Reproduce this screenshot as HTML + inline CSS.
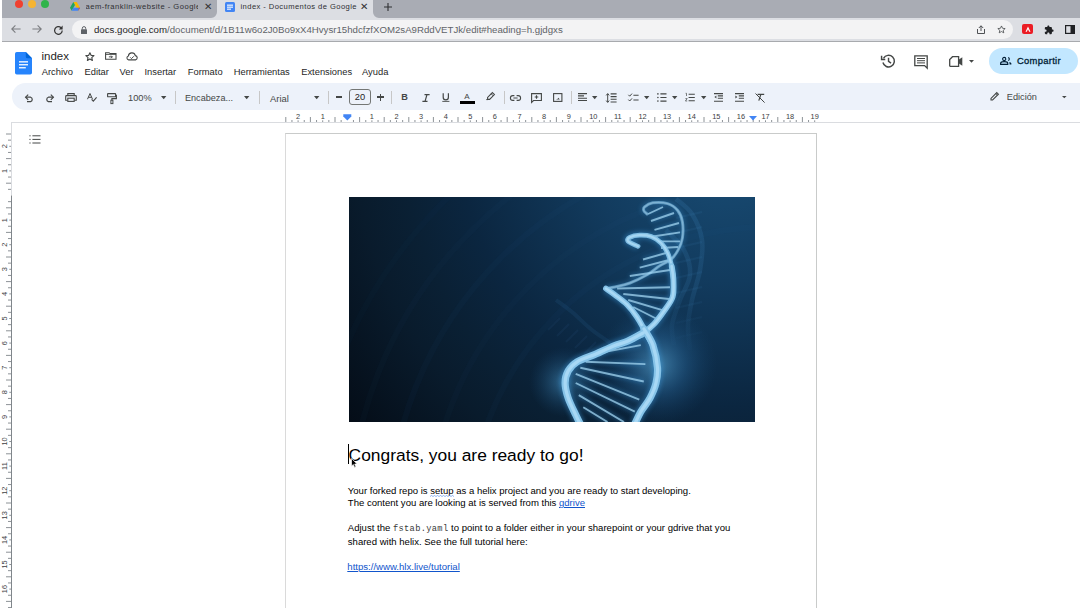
<!DOCTYPE html>
<html><head><meta charset="utf-8">
<style>
*{margin:0;padding:0;box-sizing:border-box}
html,body{width:1080px;height:608px;overflow:hidden;background:#fff;font-family:"Liberation Sans",sans-serif;position:relative}
.a{position:absolute}
.t{position:absolute;white-space:nowrap;line-height:1}
svg{position:absolute;overflow:visible}
</style></head><body>

<!-- ===== Chrome tab bar ===== -->
<div class="a" style="left:2px;top:0;width:1078px;height:18px;background:#a9acb4"></div>
<!-- traffic lights -->
<div class="a" style="left:15px;top:0px;width:8px;height:8px;border-radius:50%;background:#f0402f"></div>
<div class="a" style="left:28px;top:0px;width:8px;height:8px;border-radius:50%;background:#f5b433"></div>
<div class="a" style="left:41px;top:0px;width:8px;height:8px;border-radius:50%;background:#2fb44a"></div>
<!-- tab 1 -->
<svg style="left:70px;top:2px" width="10" height="9" viewBox="0 0 10 9">
 <path d="M3.3 0 L6.7 0 L10 5.8 L8.3 8.7 Z" fill="#f7b900"/>
 <path d="M3.3 0 L0 5.8 L1.7 8.7 L5 2.9 Z" fill="#1fa463"/>
 <path d="M1.7 8.7 L8.3 8.7 L10 5.8 L3.3 5.8 Z" fill="#4285f4"/>
 <path d="M8.3 8.7 L10 5.8 L8.8 5.8 Z" fill="#ea4335"/>
</svg>
<div class="t" style="left:85.5px;top:3.2px;font-size:7.6px;letter-spacing:0.48px;color:#2f3033;width:112px;overflow:hidden">aem-franklin-website - Google Drive</div>
<div class="t" style="left:204px;top:1.5px;font-size:10px;color:#333">&#x2715;</div>
<!-- active tab -->
<div class="a" style="left:217px;top:0;width:156px;height:18px;background:#dcdee3;border-radius:0 0 0 0"></div>
<svg style="left:211px;top:12px" width="6" height="6"><path d="M6 0 V6 H0 A6 6 0 0 0 6 0Z" fill="#dcdee3"/></svg>
<svg style="left:373px;top:12px" width="6" height="6"><path d="M0 0 V6 H6 A6 6 0 0 1 0 0Z" fill="#dcdee3"/></svg>
<svg style="left:225px;top:2px" width="10" height="10" viewBox="0 0 10 10">
 <rect x="0" y="0" width="10" height="10" rx="1.5" fill="#4285f4"/>
 <rect x="2" y="2.6" width="6" height="1.1" fill="#fff"/><rect x="2" y="4.6" width="6" height="1.1" fill="#fff"/><rect x="2" y="6.6" width="4" height="1.1" fill="#fff"/>
</svg>
<div class="t" style="left:240.5px;top:3.2px;font-size:7.6px;letter-spacing:0.42px;color:#2f3033">index - Documentos de Google</div>
<div class="t" style="left:359.5px;top:1.5px;font-size:10px;color:#333">&#x2715;</div>
<svg style="left:384px;top:2.8px" width="8" height="8" viewBox="0 0 8 8"><path d="M4 0V8M0 4H8" stroke="#2f3033" stroke-width="1.1"/></svg>

<!-- ===== Chrome toolbar ===== -->
<div class="a" style="left:2px;top:18px;width:1078px;height:23px;background:#dcdee3"></div>
<div class="a" style="left:2px;top:40.5px;width:1078px;height:1.5px;background:#a8aaae"></div>
<div class="a" style="left:72px;top:19.5px;width:941px;height:19px;border-radius:10px;background:#f3f3f4"></div>
<div class="t" style="left:94px;top:24.5px;font-size:9.67px;color:#1f1f1f">docs.google.com<span style="color:#5f6368">/document/d/1B11w6o2J0Bo9xX4Hvysr15hdcfzfXOM2sA9RddVETJk/edit#heading=h.gjdgxs</span></div>
<!-- nav icons -->
<svg style="left:10.8px;top:25.2px" width="10" height="8" viewBox="0 0 10 8"><path d="M9.6 4H0.8M4.4 0.4L0.8 4L4.4 7.6" fill="none" stroke="#7b7d81" stroke-width="1.1"/></svg>
<svg style="left:31.6px;top:25.2px" width="10" height="8" viewBox="0 0 10 8"><path d="M0.4 4H9.2M5.6 0.4L9.2 4L5.6 7.6" fill="none" stroke="#7b7d81" stroke-width="1.1"/></svg>
<svg style="left:53px;top:24.5px" width="11" height="11" viewBox="0 0 11 11"><path d="M9.2 5.5A3.8 3.8 0 1 1 8 2.7" fill="none" stroke="#333" stroke-width="1.2"/><path d="M9.6 0.6V4.4H5.8Z" fill="#333"/></svg>
<!-- lock -->
<svg style="left:81px;top:25.5px" width="6" height="8" viewBox="0 0 6 8"><rect x="0" y="3.3" width="6" height="4.7" rx="0.6" fill="#5f6368"/><path d="M1.3 3.5V2.3A1.7 1.7 0 0 1 4.7 2.3V3.5" fill="none" stroke="#5f6368" stroke-width="1"/></svg>
<!-- share / star in omnibox -->
<svg style="left:976.5px;top:25px" width="8" height="9" viewBox="0 0 8 9"><path d="M0.5 4V8.5H7.5V4M4 6V0.8M1.8 3L4 0.8L6.2 3" fill="none" stroke="#3c4043" stroke-width="0.9"/></svg>
<svg style="left:996.5px;top:24.5px" width="9" height="9" viewBox="0 0 24 24"><path d="M12 2.5l2.9 6.3 6.9.7-5.2 4.6 1.5 6.8L12 17.4l-6.1 3.5 1.5-6.8L2.2 9.5l6.9-.7z" fill="none" stroke="#3c4043" stroke-width="2"/></svg>
<!-- extensions -->
<div class="a" style="left:1022px;top:24.3px;width:11px;height:10px;border-radius:2px;background:#eb1c24"></div>
<svg style="left:1024.5px;top:26px" width="6" height="6" viewBox="0 0 6 6"><path d="M0.5 5.8L3 0.5L5.5 5.8H4.2L3 3.2L1.8 5.8Z" fill="#fff"/></svg>
<svg style="left:1043.5px;top:24.5px" width="10" height="10" viewBox="0 0 24 24"><path d="M20.5 11H19V7c0-1.1-.9-2-2-2h-4V3.5C13 2.12 11.88 1 10.5 1S8 2.12 8 3.5V5H4c-1.1 0-2 .9-2 2v3.8h1.5c1.49 0 2.7 1.21 2.7 2.7s-1.21 2.7-2.7 2.7H2V20c0 1.1.9 2 2 2h3.8v-1.5c0-1.49 1.21-2.7 2.7-2.7 1.49 0 2.7 1.21 2.7 2.7V22H17c1.1 0 2-.9 2-2v-4h1.5c1.38 0 2.5-1.12 2.5-2.5S21.88 11 20.5 11z" fill="#202124"/></svg>
<svg style="left:1064.5px;top:25px" width="10" height="9" viewBox="0 0 10 9"><rect x="0.6" y="0.6" width="8.8" height="7.8" fill="none" stroke="#202124" stroke-width="1.2"/><rect x="5.5" y="0.6" width="3.9" height="7.8" fill="#202124"/></svg>

<!-- ===== Docs header ===== -->
<svg style="left:15px;top:51.8px" width="17" height="23" viewBox="0 0 17 23">
 <path d="M1.8 0H10.8L17 6.3V20.8A1.8 1.8 0 0 1 15.2 22.6H1.8A1.8 1.8 0 0 1 0 20.8V1.8A1.8 1.8 0 0 1 1.8 0Z" fill="#2684fc"/>
 <path d="M10.8 0L17 6.3H12.3A1.5 1.5 0 0 1 10.8 4.8Z" fill="#0066da"/>
 <rect x="4" y="9.2" width="9" height="1.3" fill="#fff"/><rect x="4" y="12.1" width="9" height="1.3" fill="#fff"/><rect x="4" y="15.1" width="6.8" height="1.3" fill="#fff"/>
</svg>
<div class="t" style="left:41.5px;top:50.8px;font-size:11.5px;color:#1f1f1f">index</div>
<svg style="left:84.8px;top:51.8px" width="9.8" height="8.6" viewBox="0 0 24 21"><path d="M12 1.8l2.9 6.4 7 .7-5.3 4.8 1.5 6.9L12 17l-6.1 3.6 1.5-6.9L2.1 8.9l7-.7z" fill="none" stroke="#444746" stroke-width="2.8" stroke-linejoin="round"/></svg>
<svg style="left:104.8px;top:52.1px" width="11.6" height="8" viewBox="0 0 12 8"><path d="M0.6 7.4V0.6H4.2L5.2 1.5H11.4V7.4Z" fill="none" stroke="#444746" stroke-width="1.1"/><path d="M0.6 2.4H11.4" stroke="#444746" stroke-width="0.9"/><path d="M4 4.9H7.6M6.3 3.6L7.6 4.9L6.3 6.2" fill="none" stroke="#444746" stroke-width="1"/></svg>
<svg style="left:125.6px;top:52.6px" width="12" height="7.5" viewBox="0 0 12 7.5"><path d="M2.6 6.9A2 2 0 0 1 2.4 3A3.5 3.5 0 0 1 9.3 2.6A2.2 2.2 0 0 1 9.6 6.9Z" fill="none" stroke="#444746" stroke-width="1.1"/><path d="M4.3 4.4L5.5 5.6L7.8 3.3" fill="none" stroke="#444746" stroke-width="1"/></svg>

<div class="t" style="left:41.7px;top:67.5px;font-size:9.35px;color:#1f1f1f">Archivo</div>
<div class="t" style="left:84.5px;top:67.5px;font-size:9.35px;color:#1f1f1f">Editar</div>
<div class="t" style="left:119.6px;top:67.5px;font-size:9.35px;color:#1f1f1f">Ver</div>
<div class="t" style="left:144.5px;top:67.5px;font-size:9.35px;color:#1f1f1f">Insertar</div>
<div class="t" style="left:187.8px;top:67.5px;font-size:9.35px;color:#1f1f1f">Formato</div>
<div class="t" style="left:233.7px;top:67.5px;font-size:9.35px;color:#1f1f1f">Herramientas</div>
<div class="t" style="left:301.2px;top:67.5px;font-size:9.35px;color:#1f1f1f">Extensiones</div>
<div class="t" style="left:362px;top:67.5px;font-size:9.35px;color:#1f1f1f">Ayuda</div>

<!-- right header icons -->
<svg style="left:881.3px;top:54.3px" width="14.5" height="14" viewBox="0 0 15 14"><path d="M2.6 4.2A6 6 0 1 1 2 8.6" fill="none" stroke="#444746" stroke-width="1.5"/><path d="M0.6 1.6V5.4H4.4" fill="none" stroke="#444746" stroke-width="1.5"/><path d="M7.8 3.6V7.4L10.4 9.2" fill="none" stroke="#444746" stroke-width="1.5"/></svg>
<svg style="left:913.5px;top:55px" width="14" height="14" viewBox="0 0 14 14"><path d="M0.8 0.8H13.2V13.2L10.6 10.6H0.8Z" fill="none" stroke="#444746" stroke-width="1.3"/><path d="M3 3.5H11M3 5.7H11M3 7.9H11" stroke="#444746" stroke-width="1"/></svg>
<svg style="left:948.5px;top:55.8px" width="14" height="11" viewBox="0 0 14 11"><path d="M3.5 0.7H9.6V10.3H1.3A0.6 0.6 0 0 1 0.7 9.7V3.5Z" fill="none" stroke="#444746" stroke-width="1.3"/><path d="M9.6 3.8L13.3 1.2V9.8L9.6 7.2Z" fill="#444746"/></svg>
<svg style="left:968.5px;top:60.3px" width="5" height="3" viewBox="0 0 5 3"><path d="M0 0H5L2.5 2.7Z" fill="#444746"/></svg>
<div class="a" style="left:989px;top:48px;width:89px;height:26px;border-radius:13px;background:#c2e7ff"></div>
<svg style="left:999.5px;top:57px" width="12" height="8" viewBox="0 0 12 8"><circle cx="4.2" cy="2" r="1.6" fill="none" stroke="#001d35" stroke-width="1.1"/><path d="M0.6 7.4V6.4C0.6 5.2 2.2 4.6 4.2 4.6S7.8 5.2 7.8 6.4V7.4Z" fill="none" stroke="#001d35" stroke-width="1.1"/><path d="M8.2 0.4A1.7 1.7 0 0 1 8.2 3.6" fill="none" stroke="#001d35" stroke-width="1.1"/><path d="M9.4 4.9C10.6 5.3 11.4 5.9 11.4 6.6V7.4H9.6" fill="#001d35"/></svg>
<div class="t" style="left:1017px;top:55.9px;font-size:9.4px;letter-spacing:0.3px;color:#001d35;-webkit-text-stroke:0.3px #001d35">Compartir</div>
<!-- ===== Docs toolbar ===== -->
<div class="a" style="left:12px;top:83px;width:1090px;height:27px;border-radius:13.5px;background:#edf2fa"></div>
<!-- undo / redo -->
<svg style="left:24.5px;top:93.7px" width="9" height="8" viewBox="0 0 9 8"><path d="M0.8 3.2H5.6A2.3 2.3 0 0 1 5.6 7.6H2" fill="none" stroke="#444746" stroke-width="1.2"/><path d="M3.2 0.6L0.6 3.2L3.2 5.8" fill="none" stroke="#444746" stroke-width="1.2"/></svg>
<svg style="left:45.3px;top:93.7px" width="9" height="8" viewBox="0 0 9 8"><path d="M8.2 3.2H3.4A2.3 2.3 0 0 0 3.4 7.6H7" fill="none" stroke="#444746" stroke-width="1.2"/><path d="M5.8 0.6L8.4 3.2L5.8 5.8" fill="none" stroke="#444746" stroke-width="1.2"/></svg>
<!-- print -->
<svg style="left:64.5px;top:93px" width="12" height="9" viewBox="0 0 12 9"><path d="M2.8 2.6V0.6H9.2V2.6" fill="none" stroke="#444746" stroke-width="1.1"/><path d="M2.6 7.2H0.7V3.4A0.8 0.8 0 0 1 1.5 2.6H10.5A0.8 0.8 0 0 1 11.3 3.4V7.2H9.4" fill="none" stroke="#444746" stroke-width="1.1"/><rect x="2.8" y="5.2" width="6.4" height="3.2" fill="none" stroke="#444746" stroke-width="1.1"/></svg>
<!-- spellcheck -->
<svg style="left:86.5px;top:92.8px" width="10" height="9" viewBox="0 0 10 9"><path d="M0.5 6.2L3 0.5L5.5 6.2M1.4 4.3H4.6" fill="none" stroke="#444746" stroke-width="1"/><path d="M4.6 6.4L6.3 8.2L9.6 4.4" fill="none" stroke="#444746" stroke-width="1.1"/></svg>
<!-- paint format -->
<svg style="left:107px;top:92.5px" width="10" height="11" viewBox="0 0 10 11"><rect x="0.6" y="0.6" width="8" height="3.2" rx="0.4" fill="none" stroke="#444746" stroke-width="1.1"/><path d="M8.6 2.2H9.4V5.6H4.9V7.2" fill="none" stroke="#444746" stroke-width="1.1"/><rect x="3.9" y="7.2" width="2" height="3.4" fill="none" stroke="#444746" stroke-width="1"/></svg>
<div class="t" style="left:128px;top:94.2px;font-size:9.25px;color:#444746">100%</div>
<svg style="left:160.5px;top:96px" width="6" height="3.5" viewBox="0 0 6 3.5"><path d="M0 0H5.4L2.7 3.2Z" fill="#444746"/></svg>
<div class="a" style="left:174.5px;top:91.3px;width:1px;height:12.3px;background:#c7c7c7"></div>
<div class="t" style="left:185px;top:94.2px;font-size:9.1px;color:#444746">Encabeza...</div>
<svg style="left:244.3px;top:96px" width="6" height="3.5" viewBox="0 0 6 3.5"><path d="M0 0H5.4L2.7 3.2Z" fill="#444746"/></svg>
<div class="a" style="left:259px;top:91.3px;width:1px;height:12.3px;background:#c7c7c7"></div>
<div class="t" style="left:270px;top:94.2px;font-size:9.4px;color:#444746">Arial</div>
<svg style="left:313.5px;top:96px" width="6" height="3.5" viewBox="0 0 6 3.5"><path d="M0 0H5.4L2.7 3.2Z" fill="#444746"/></svg>
<div class="a" style="left:328px;top:91.3px;width:1px;height:12.3px;background:#c7c7c7"></div>
<div class="a" style="left:335.8px;top:96.4px;width:6.4px;height:1.2px;background:#444746"></div>
<div class="a" style="left:349px;top:89.2px;width:21.6px;height:15.6px;border:1px solid #747775;border-radius:3px"></div>
<div class="t" style="left:354.8px;top:93.4px;font-size:9.3px;color:#1f1f1f">20</div>
<div class="a" style="left:377.2px;top:96.4px;width:7px;height:1.2px;background:#444746"></div>
<div class="a" style="left:380.1px;top:93.5px;width:1.2px;height:7px;background:#444746"></div>
<div class="a" style="left:391px;top:91.3px;width:1px;height:12.3px;background:#c7c7c7"></div>
<div class="t" style="left:401.2px;top:93.3px;font-size:9.2px;color:#444746;font-weight:bold">B</div>
<svg style="left:421.5px;top:93.8px" width="8" height="8" viewBox="0 0 8 8"><path d="M2.5 0.6H7.6M0.4 7.4H5.5M5 0.6L3 7.4" fill="none" stroke="#444746" stroke-width="1.2"/></svg>
<svg style="left:442.3px;top:93px" width="8" height="9" viewBox="0 0 8 9"><path d="M1.2 0.3V4.3A2.6 2.6 0 0 0 6.4 4.3V0.3" fill="none" stroke="#444746" stroke-width="1.2"/><path d="M0.3 8.4H7.4" stroke="#444746" stroke-width="0.9"/></svg>
<div class="t" style="left:464.3px;top:92.8px;font-size:8px;color:#444746">A</div>
<div class="a" style="left:460px;top:101.2px;width:15px;height:2.6px;background:#000"></div>
<svg style="left:485.5px;top:92.3px" width="9" height="8" viewBox="0 0 9 8"><path d="M6.4 0.6L8.4 2.6L3.6 7.4H1.6V5.4Z" fill="none" stroke="#444746" stroke-width="1.1"/><path d="M5.2 1.8L7.2 3.8" stroke="#444746" stroke-width="1"/><path d="M0.2 7.6H2" stroke="#444746" stroke-width="0.9"/></svg>
<div class="a" style="left:503.5px;top:91.3px;width:1px;height:12.3px;background:#c7c7c7"></div>
<svg style="left:510px;top:95px" width="11" height="6" viewBox="0 0 11 6"><path d="M4.4 0.6H2.8A2.3 2.3 0 0 0 2.8 5.4H4.4M6.6 0.6H8.2A2.3 2.3 0 0 1 8.2 5.4H6.6M3.4 3H7.6" fill="none" stroke="#444746" stroke-width="1.1"/></svg>
<svg style="left:531px;top:93px" width="11" height="10" viewBox="0 0 11 10"><path d="M0.6 9.4V0.6H10.4V7.5H2.5Z" fill="none" stroke="#444746" stroke-width="1.1"/><path d="M5.5 2.2V5.8M3.7 4H7.3" stroke="#444746" stroke-width="1.1"/></svg>
<svg style="left:553px;top:93.3px" width="9.5" height="9" viewBox="0 0 9.5 9"><rect x="0.6" y="0.6" width="8.3" height="7.8" fill="none" stroke="#444746" stroke-width="1.1"/><path d="M2.8 6.6H6.8L5.5 4.8L4.4 5.9Z" fill="#444746"/></svg>
<div class="a" style="left:571px;top:91.3px;width:1px;height:12.3px;background:#c7c7c7"></div>
<svg style="left:577.8px;top:92.8px" width="9" height="9" viewBox="0 0 9 9"><path d="M0 0.6H9M0 2.9H6M0 5.2H9M0 7.5H9" stroke="#444746" stroke-width="1.1"/></svg>
<svg style="left:592px;top:96px" width="6" height="3.5" viewBox="0 0 6 3.5"><path d="M0 0H5.4L2.7 3.2Z" fill="#444746"/></svg>
<svg style="left:605.5px;top:92.8px" width="11" height="10" viewBox="0 0 11 10"><path d="M4.6 0.9H10.6M4.6 3.6H10.6M4.6 6.3H10.6M4.6 9H10.6" stroke="#444746" stroke-width="1.1"/><path d="M1.7 0.8V9.2M0.2 2.4L1.7 0.6L3.2 2.4M0.2 7.6L1.7 9.4L3.2 7.6" fill="none" stroke="#444746" stroke-width="1"/></svg>
<svg style="left:627.5px;top:92.5px" width="11" height="10" viewBox="0 0 11 10"><path d="M0.4 1.8L1.7 3.2L4 0.6M0.4 6.6L1.7 8L4 5.4" fill="none" stroke="#444746" stroke-width="1"/><path d="M5.4 2.2H10.6M5.4 7H10.6" stroke="#444746" stroke-width="1.1"/></svg>
<svg style="left:644px;top:96px" width="6" height="3.5" viewBox="0 0 6 3.5"><path d="M0 0H5.4L2.7 3.2Z" fill="#444746"/></svg>
<svg style="left:657px;top:93px" width="10" height="9" viewBox="0 0 10 9"><path d="M3.4 0.9H9.5M3.4 4.5H9.5M3.4 8.1H9.5" stroke="#444746" stroke-width="1.1"/><circle cx="0.9" cy="0.9" r="0.8" fill="#444746"/><circle cx="0.9" cy="4.5" r="0.8" fill="#444746"/><circle cx="0.9" cy="8.1" r="0.8" fill="#444746"/></svg>
<svg style="left:672.3px;top:96px" width="6" height="3.5" viewBox="0 0 6 3.5"><path d="M0 0H5.4L2.7 3.2Z" fill="#444746"/></svg>
<svg style="left:685px;top:93px" width="10" height="9" viewBox="0 0 10 9"><path d="M3.6 1.2H9.8M3.6 4.5H9.8M3.6 7.8H9.8" stroke="#444746" stroke-width="1.1"/><path d="M0.6 0.3H1.5V3M0.4 5.6H2.2L0.4 8H2.2" fill="none" stroke="#444746" stroke-width="0.7"/></svg>
<svg style="left:701px;top:96px" width="6" height="3.5" viewBox="0 0 6 3.5"><path d="M0 0H5.4L2.7 3.2Z" fill="#444746"/></svg>
<svg style="left:714px;top:93px" width="9" height="9" viewBox="0 0 9 9"><path d="M0 0.6H9M3.8 2.9H9M3.8 5.2H9M0 8.2H9" stroke="#444746" stroke-width="1.1"/><path d="M2.4 2.6V5.6L0.4 4.1Z" fill="#444746"/></svg>
<svg style="left:735px;top:93px" width="9" height="9" viewBox="0 0 9 9"><path d="M0 0.6H9M3.8 2.9H9M3.8 5.2H9M0 8.2H9" stroke="#444746" stroke-width="1.1"/><path d="M0.4 2.6V5.6L2.4 4.1Z" fill="#444746"/></svg>
<svg style="left:755px;top:93px" width="10" height="10" viewBox="0 0 10 10"><path d="M2.6 1.4H9.2M5.9 1.4L3.8 7.6" fill="none" stroke="#444746" stroke-width="1.2"/><path d="M0.5 0.5L9.6 9.6" stroke="#444746" stroke-width="1"/></svg>
<!-- Edicion -->
<svg style="left:990px;top:92.2px" width="9" height="9" viewBox="0 0 9 9"><path d="M6.8 0.6L8.4 2.2L2.6 8H1V6.4Z" fill="none" stroke="#444746" stroke-width="1.1"/><path d="M5.8 1.6L7.4 3.2" stroke="#444746" stroke-width="0.9"/></svg>
<div class="t" style="left:1006.8px;top:93.3px;font-size:9.2px;color:#444746">Edición</div>
<svg style="left:1061.8px;top:96px" width="5" height="2.5" viewBox="0 0 5 2.5"><path d="M0 0H4.6L2.3 2.3Z" fill="#444746"/></svg>
<!-- ===== Rulers ===== -->
<div id="ruler">
<svg style="left:0;top:110px" width="1080" height="14" viewBox="0 110 1080 14">
<path d="M11 122.5H1080" stroke="#dadce0" stroke-width="1"/>
<path d="M285.80 117V122" stroke="#80868b" stroke-width="0.9"/>
<path d="M291.95 120V122" stroke="#80868b" stroke-width="0.9"/>
<path d="M298.10 120.3V122" stroke="#80868b" stroke-width="0.9"/>
<path d="M304.25 120V122" stroke="#80868b" stroke-width="0.9"/>
<path d="M310.40 117V122" stroke="#80868b" stroke-width="0.9"/>
<path d="M316.55 120V122" stroke="#80868b" stroke-width="0.9"/>
<path d="M322.70 120.3V122" stroke="#80868b" stroke-width="0.9"/>
<path d="M328.85 120V122" stroke="#80868b" stroke-width="0.9"/>
<path d="M335.00 117V122" stroke="#80868b" stroke-width="0.9"/>
<path d="M341.15 120V122" stroke="#80868b" stroke-width="0.9"/>
<path d="M353.45 120V122" stroke="#80868b" stroke-width="0.9"/>
<path d="M359.60 117V122" stroke="#80868b" stroke-width="0.9"/>
<path d="M365.75 120V122" stroke="#80868b" stroke-width="0.9"/>
<path d="M371.90 120.3V122" stroke="#80868b" stroke-width="0.9"/>
<path d="M378.05 120V122" stroke="#80868b" stroke-width="0.9"/>
<path d="M384.20 117V122" stroke="#80868b" stroke-width="0.9"/>
<path d="M390.35 120V122" stroke="#80868b" stroke-width="0.9"/>
<path d="M396.50 120.3V122" stroke="#80868b" stroke-width="0.9"/>
<path d="M402.65 120V122" stroke="#80868b" stroke-width="0.9"/>
<path d="M408.80 117V122" stroke="#80868b" stroke-width="0.9"/>
<path d="M414.95 120V122" stroke="#80868b" stroke-width="0.9"/>
<path d="M421.10 120.3V122" stroke="#80868b" stroke-width="0.9"/>
<path d="M427.25 120V122" stroke="#80868b" stroke-width="0.9"/>
<path d="M433.40 117V122" stroke="#80868b" stroke-width="0.9"/>
<path d="M439.55 120V122" stroke="#80868b" stroke-width="0.9"/>
<path d="M445.70 120.3V122" stroke="#80868b" stroke-width="0.9"/>
<path d="M451.85 120V122" stroke="#80868b" stroke-width="0.9"/>
<path d="M458.00 117V122" stroke="#80868b" stroke-width="0.9"/>
<path d="M464.15 120V122" stroke="#80868b" stroke-width="0.9"/>
<path d="M470.30 120.3V122" stroke="#80868b" stroke-width="0.9"/>
<path d="M476.45 120V122" stroke="#80868b" stroke-width="0.9"/>
<path d="M482.60 117V122" stroke="#80868b" stroke-width="0.9"/>
<path d="M488.75 120V122" stroke="#80868b" stroke-width="0.9"/>
<path d="M494.90 120.3V122" stroke="#80868b" stroke-width="0.9"/>
<path d="M501.05 120V122" stroke="#80868b" stroke-width="0.9"/>
<path d="M507.20 117V122" stroke="#80868b" stroke-width="0.9"/>
<path d="M513.35 120V122" stroke="#80868b" stroke-width="0.9"/>
<path d="M519.50 120.3V122" stroke="#80868b" stroke-width="0.9"/>
<path d="M525.65 120V122" stroke="#80868b" stroke-width="0.9"/>
<path d="M531.80 117V122" stroke="#80868b" stroke-width="0.9"/>
<path d="M537.95 120V122" stroke="#80868b" stroke-width="0.9"/>
<path d="M544.10 120.3V122" stroke="#80868b" stroke-width="0.9"/>
<path d="M550.25 120V122" stroke="#80868b" stroke-width="0.9"/>
<path d="M556.40 117V122" stroke="#80868b" stroke-width="0.9"/>
<path d="M562.55 120V122" stroke="#80868b" stroke-width="0.9"/>
<path d="M568.70 120.3V122" stroke="#80868b" stroke-width="0.9"/>
<path d="M574.85 120V122" stroke="#80868b" stroke-width="0.9"/>
<path d="M581.00 117V122" stroke="#80868b" stroke-width="0.9"/>
<path d="M587.15 120V122" stroke="#80868b" stroke-width="0.9"/>
<path d="M593.30 120.3V122" stroke="#80868b" stroke-width="0.9"/>
<path d="M599.45 120V122" stroke="#80868b" stroke-width="0.9"/>
<path d="M605.60 117V122" stroke="#80868b" stroke-width="0.9"/>
<path d="M611.75 120V122" stroke="#80868b" stroke-width="0.9"/>
<path d="M617.90 120.3V122" stroke="#80868b" stroke-width="0.9"/>
<path d="M624.05 120V122" stroke="#80868b" stroke-width="0.9"/>
<path d="M630.20 117V122" stroke="#80868b" stroke-width="0.9"/>
<path d="M636.35 120V122" stroke="#80868b" stroke-width="0.9"/>
<path d="M642.50 120.3V122" stroke="#80868b" stroke-width="0.9"/>
<path d="M648.65 120V122" stroke="#80868b" stroke-width="0.9"/>
<path d="M654.80 117V122" stroke="#80868b" stroke-width="0.9"/>
<path d="M660.95 120V122" stroke="#80868b" stroke-width="0.9"/>
<path d="M667.10 120.3V122" stroke="#80868b" stroke-width="0.9"/>
<path d="M673.25 120V122" stroke="#80868b" stroke-width="0.9"/>
<path d="M679.40 117V122" stroke="#80868b" stroke-width="0.9"/>
<path d="M685.55 120V122" stroke="#80868b" stroke-width="0.9"/>
<path d="M691.70 120.3V122" stroke="#80868b" stroke-width="0.9"/>
<path d="M697.85 120V122" stroke="#80868b" stroke-width="0.9"/>
<path d="M704.00 117V122" stroke="#80868b" stroke-width="0.9"/>
<path d="M710.15 120V122" stroke="#80868b" stroke-width="0.9"/>
<path d="M716.30 120.3V122" stroke="#80868b" stroke-width="0.9"/>
<path d="M722.45 120V122" stroke="#80868b" stroke-width="0.9"/>
<path d="M728.60 117V122" stroke="#80868b" stroke-width="0.9"/>
<path d="M734.75 120V122" stroke="#80868b" stroke-width="0.9"/>
<path d="M740.90 120.3V122" stroke="#80868b" stroke-width="0.9"/>
<path d="M747.05 120V122" stroke="#80868b" stroke-width="0.9"/>
<path d="M753.20 117V122" stroke="#80868b" stroke-width="0.9"/>
<path d="M759.35 120V122" stroke="#80868b" stroke-width="0.9"/>
<path d="M765.50 120.3V122" stroke="#80868b" stroke-width="0.9"/>
<path d="M771.65 120V122" stroke="#80868b" stroke-width="0.9"/>
<path d="M777.80 117V122" stroke="#80868b" stroke-width="0.9"/>
<path d="M783.95 120V122" stroke="#80868b" stroke-width="0.9"/>
<path d="M790.10 120.3V122" stroke="#80868b" stroke-width="0.9"/>
<path d="M796.25 120V122" stroke="#80868b" stroke-width="0.9"/>
<path d="M802.40 117V122" stroke="#80868b" stroke-width="0.9"/>
<path d="M808.55 120V122" stroke="#80868b" stroke-width="0.9"/>
<path d="M814.70 120.3V122" stroke="#80868b" stroke-width="0.9"/>
<text x="298.10" y="119" font-size="7.4" text-anchor="middle" fill="#3c4043" font-family="Liberation Sans">2</text>
<text x="322.70" y="119" font-size="7.4" text-anchor="middle" fill="#3c4043" font-family="Liberation Sans">1</text>
<text x="371.90" y="119" font-size="7.4" text-anchor="middle" fill="#3c4043" font-family="Liberation Sans">1</text>
<text x="396.50" y="119" font-size="7.4" text-anchor="middle" fill="#3c4043" font-family="Liberation Sans">2</text>
<text x="421.10" y="119" font-size="7.4" text-anchor="middle" fill="#3c4043" font-family="Liberation Sans">3</text>
<text x="445.70" y="119" font-size="7.4" text-anchor="middle" fill="#3c4043" font-family="Liberation Sans">4</text>
<text x="470.30" y="119" font-size="7.4" text-anchor="middle" fill="#3c4043" font-family="Liberation Sans">5</text>
<text x="494.90" y="119" font-size="7.4" text-anchor="middle" fill="#3c4043" font-family="Liberation Sans">6</text>
<text x="519.50" y="119" font-size="7.4" text-anchor="middle" fill="#3c4043" font-family="Liberation Sans">7</text>
<text x="544.10" y="119" font-size="7.4" text-anchor="middle" fill="#3c4043" font-family="Liberation Sans">8</text>
<text x="568.70" y="119" font-size="7.4" text-anchor="middle" fill="#3c4043" font-family="Liberation Sans">9</text>
<text x="593.30" y="119" font-size="7.4" text-anchor="middle" fill="#3c4043" font-family="Liberation Sans">10</text>
<text x="617.90" y="119" font-size="7.4" text-anchor="middle" fill="#3c4043" font-family="Liberation Sans">11</text>
<text x="642.50" y="119" font-size="7.4" text-anchor="middle" fill="#3c4043" font-family="Liberation Sans">12</text>
<text x="667.10" y="119" font-size="7.4" text-anchor="middle" fill="#3c4043" font-family="Liberation Sans">13</text>
<text x="691.70" y="119" font-size="7.4" text-anchor="middle" fill="#3c4043" font-family="Liberation Sans">14</text>
<text x="716.30" y="119" font-size="7.4" text-anchor="middle" fill="#3c4043" font-family="Liberation Sans">15</text>
<text x="740.90" y="119" font-size="7.4" text-anchor="middle" fill="#3c4043" font-family="Liberation Sans">16</text>
<text x="765.50" y="119" font-size="7.4" text-anchor="middle" fill="#3c4043" font-family="Liberation Sans">17</text>
<text x="790.10" y="119" font-size="7.4" text-anchor="middle" fill="#3c4043" font-family="Liberation Sans">18</text>
<text x="814.70" y="119" font-size="7.4" text-anchor="middle" fill="#3c4043" font-family="Liberation Sans">19</text>
</svg>
<svg style="left:0;top:122px" width="14" height="486" viewBox="0 122 14 486">
<path d="M11.5 122.5V195.5" stroke="#dadce0" stroke-width="1"/>
<path d="M11.5 195.5V608" stroke="#80868b" stroke-width="1"/>
<path d="M6 134.00H11" stroke="#80868b" stroke-width="0.9"/>
<path d="M8 140.15H11" stroke="#80868b" stroke-width="0.9"/>
<path d="M9.3 146.30H11" stroke="#80868b" stroke-width="0.9"/>
<path d="M8 152.45H11" stroke="#80868b" stroke-width="0.9"/>
<path d="M6 158.60H11" stroke="#80868b" stroke-width="0.9"/>
<path d="M8 164.75H11" stroke="#80868b" stroke-width="0.9"/>
<path d="M9.3 170.90H11" stroke="#80868b" stroke-width="0.9"/>
<path d="M8 177.05H11" stroke="#80868b" stroke-width="0.9"/>
<path d="M6 183.20H11" stroke="#80868b" stroke-width="0.9"/>
<path d="M8 189.35H11" stroke="#80868b" stroke-width="0.9"/>
<path d="M8 201.65H11" stroke="#80868b" stroke-width="0.9"/>
<path d="M6 207.80H11" stroke="#80868b" stroke-width="0.9"/>
<path d="M8 213.95H11" stroke="#80868b" stroke-width="0.9"/>
<path d="M9.3 220.10H11" stroke="#80868b" stroke-width="0.9"/>
<path d="M8 226.25H11" stroke="#80868b" stroke-width="0.9"/>
<path d="M6 232.40H11" stroke="#80868b" stroke-width="0.9"/>
<path d="M8 238.55H11" stroke="#80868b" stroke-width="0.9"/>
<path d="M9.3 244.70H11" stroke="#80868b" stroke-width="0.9"/>
<path d="M8 250.85H11" stroke="#80868b" stroke-width="0.9"/>
<path d="M6 257.00H11" stroke="#80868b" stroke-width="0.9"/>
<path d="M8 263.15H11" stroke="#80868b" stroke-width="0.9"/>
<path d="M9.3 269.30H11" stroke="#80868b" stroke-width="0.9"/>
<path d="M8 275.45H11" stroke="#80868b" stroke-width="0.9"/>
<path d="M6 281.60H11" stroke="#80868b" stroke-width="0.9"/>
<path d="M8 287.75H11" stroke="#80868b" stroke-width="0.9"/>
<path d="M9.3 293.90H11" stroke="#80868b" stroke-width="0.9"/>
<path d="M8 300.05H11" stroke="#80868b" stroke-width="0.9"/>
<path d="M6 306.20H11" stroke="#80868b" stroke-width="0.9"/>
<path d="M8 312.35H11" stroke="#80868b" stroke-width="0.9"/>
<path d="M9.3 318.50H11" stroke="#80868b" stroke-width="0.9"/>
<path d="M8 324.65H11" stroke="#80868b" stroke-width="0.9"/>
<path d="M6 330.80H11" stroke="#80868b" stroke-width="0.9"/>
<path d="M8 336.95H11" stroke="#80868b" stroke-width="0.9"/>
<path d="M9.3 343.10H11" stroke="#80868b" stroke-width="0.9"/>
<path d="M8 349.25H11" stroke="#80868b" stroke-width="0.9"/>
<path d="M6 355.40H11" stroke="#80868b" stroke-width="0.9"/>
<path d="M8 361.55H11" stroke="#80868b" stroke-width="0.9"/>
<path d="M9.3 367.70H11" stroke="#80868b" stroke-width="0.9"/>
<path d="M8 373.85H11" stroke="#80868b" stroke-width="0.9"/>
<path d="M6 380.00H11" stroke="#80868b" stroke-width="0.9"/>
<path d="M8 386.15H11" stroke="#80868b" stroke-width="0.9"/>
<path d="M9.3 392.30H11" stroke="#80868b" stroke-width="0.9"/>
<path d="M8 398.45H11" stroke="#80868b" stroke-width="0.9"/>
<path d="M6 404.60H11" stroke="#80868b" stroke-width="0.9"/>
<path d="M8 410.75H11" stroke="#80868b" stroke-width="0.9"/>
<path d="M9.3 416.90H11" stroke="#80868b" stroke-width="0.9"/>
<path d="M8 423.05H11" stroke="#80868b" stroke-width="0.9"/>
<path d="M6 429.20H11" stroke="#80868b" stroke-width="0.9"/>
<path d="M8 435.35H11" stroke="#80868b" stroke-width="0.9"/>
<path d="M9.3 441.50H11" stroke="#80868b" stroke-width="0.9"/>
<path d="M8 447.65H11" stroke="#80868b" stroke-width="0.9"/>
<path d="M6 453.80H11" stroke="#80868b" stroke-width="0.9"/>
<path d="M8 459.95H11" stroke="#80868b" stroke-width="0.9"/>
<path d="M9.3 466.10H11" stroke="#80868b" stroke-width="0.9"/>
<path d="M8 472.25H11" stroke="#80868b" stroke-width="0.9"/>
<path d="M6 478.40H11" stroke="#80868b" stroke-width="0.9"/>
<path d="M8 484.55H11" stroke="#80868b" stroke-width="0.9"/>
<path d="M9.3 490.70H11" stroke="#80868b" stroke-width="0.9"/>
<path d="M8 496.85H11" stroke="#80868b" stroke-width="0.9"/>
<path d="M6 503.00H11" stroke="#80868b" stroke-width="0.9"/>
<path d="M8 509.15H11" stroke="#80868b" stroke-width="0.9"/>
<path d="M9.3 515.30H11" stroke="#80868b" stroke-width="0.9"/>
<path d="M8 521.45H11" stroke="#80868b" stroke-width="0.9"/>
<path d="M6 527.60H11" stroke="#80868b" stroke-width="0.9"/>
<path d="M8 533.75H11" stroke="#80868b" stroke-width="0.9"/>
<path d="M9.3 539.90H11" stroke="#80868b" stroke-width="0.9"/>
<path d="M8 546.05H11" stroke="#80868b" stroke-width="0.9"/>
<path d="M6 552.20H11" stroke="#80868b" stroke-width="0.9"/>
<path d="M8 558.35H11" stroke="#80868b" stroke-width="0.9"/>
<path d="M9.3 564.50H11" stroke="#80868b" stroke-width="0.9"/>
<path d="M8 570.65H11" stroke="#80868b" stroke-width="0.9"/>
<path d="M6 576.80H11" stroke="#80868b" stroke-width="0.9"/>
<path d="M8 582.95H11" stroke="#80868b" stroke-width="0.9"/>
<path d="M9.3 589.10H11" stroke="#80868b" stroke-width="0.9"/>
<path d="M8 595.25H11" stroke="#80868b" stroke-width="0.9"/>
<path d="M6 601.40H11" stroke="#80868b" stroke-width="0.9"/>
<path d="M8 607.55H11" stroke="#80868b" stroke-width="0.9"/>
<text x="0" y="0" transform="translate(6.8 146.30) rotate(-90)" font-size="7.4" text-anchor="middle" fill="#3c4043" font-family="Liberation Sans">2</text>
<text x="0" y="0" transform="translate(6.8 170.90) rotate(-90)" font-size="7.4" text-anchor="middle" fill="#3c4043" font-family="Liberation Sans">1</text>
<text x="0" y="0" transform="translate(6.8 220.10) rotate(-90)" font-size="7.4" text-anchor="middle" fill="#3c4043" font-family="Liberation Sans">1</text>
<text x="0" y="0" transform="translate(6.8 244.70) rotate(-90)" font-size="7.4" text-anchor="middle" fill="#3c4043" font-family="Liberation Sans">2</text>
<text x="0" y="0" transform="translate(6.8 269.30) rotate(-90)" font-size="7.4" text-anchor="middle" fill="#3c4043" font-family="Liberation Sans">3</text>
<text x="0" y="0" transform="translate(6.8 293.90) rotate(-90)" font-size="7.4" text-anchor="middle" fill="#3c4043" font-family="Liberation Sans">4</text>
<text x="0" y="0" transform="translate(6.8 318.50) rotate(-90)" font-size="7.4" text-anchor="middle" fill="#3c4043" font-family="Liberation Sans">5</text>
<text x="0" y="0" transform="translate(6.8 343.10) rotate(-90)" font-size="7.4" text-anchor="middle" fill="#3c4043" font-family="Liberation Sans">6</text>
<text x="0" y="0" transform="translate(6.8 367.70) rotate(-90)" font-size="7.4" text-anchor="middle" fill="#3c4043" font-family="Liberation Sans">7</text>
<text x="0" y="0" transform="translate(6.8 392.30) rotate(-90)" font-size="7.4" text-anchor="middle" fill="#3c4043" font-family="Liberation Sans">8</text>
<text x="0" y="0" transform="translate(6.8 416.90) rotate(-90)" font-size="7.4" text-anchor="middle" fill="#3c4043" font-family="Liberation Sans">9</text>
<text x="0" y="0" transform="translate(6.8 441.50) rotate(-90)" font-size="7.4" text-anchor="middle" fill="#3c4043" font-family="Liberation Sans">10</text>
<text x="0" y="0" transform="translate(6.8 466.10) rotate(-90)" font-size="7.4" text-anchor="middle" fill="#3c4043" font-family="Liberation Sans">11</text>
<text x="0" y="0" transform="translate(6.8 490.70) rotate(-90)" font-size="7.4" text-anchor="middle" fill="#3c4043" font-family="Liberation Sans">12</text>
<text x="0" y="0" transform="translate(6.8 515.30) rotate(-90)" font-size="7.4" text-anchor="middle" fill="#3c4043" font-family="Liberation Sans">13</text>
<text x="0" y="0" transform="translate(6.8 539.90) rotate(-90)" font-size="7.4" text-anchor="middle" fill="#3c4043" font-family="Liberation Sans">14</text>
<text x="0" y="0" transform="translate(6.8 564.50) rotate(-90)" font-size="7.4" text-anchor="middle" fill="#3c4043" font-family="Liberation Sans">15</text>
<text x="0" y="0" transform="translate(6.8 589.10) rotate(-90)" font-size="7.4" text-anchor="middle" fill="#3c4043" font-family="Liberation Sans">16</text>
</svg>
</div>
<!-- indent markers -->
<svg style="left:343px;top:113.5px" width="9" height="7" viewBox="0 0 9 7"><path d="M0.3 0.3H8.3V2.6L4.3 6.6L0.3 2.6Z" fill="#4285f4"/></svg>
<svg style="left:749px;top:116px" width="8" height="5" viewBox="0 0 8 5"><path d="M0 0H8L4 4.6Z" fill="#4285f4"/></svg>
<!-- outline icon -->
<svg style="left:28.5px;top:134.8px" width="12" height="9" viewBox="0 0 12 9"><path d="M3.4 0.8H11.5M3.4 4.4H11.5M3.4 8H11.5" stroke="#444746" stroke-width="1"/><path d="M0.4 0.8H1.6M0.4 4.4H1.6M0.4 8H1.6" stroke="#444746" stroke-width="1"/></svg>

<!-- ===== Page ===== -->
<div class="a" style="left:285px;top:133px;width:532px;height:500px;border:1px solid #c9cbca;border-left-color:#dadada;background:#fff"></div>
<div id="img"><svg class="a" style="left:349px;top:197px;overflow:hidden" width="406" height="225" viewBox="0 0 406 225">
<defs>
<radialGradient id="bg" cx="380" cy="-60" r="480" gradientUnits="userSpaceOnUse">
<stop offset="0.1" stop-color="#17486f"/><stop offset="0.3" stop-color="#123b5e"/><stop offset="0.56" stop-color="#0b2640"/><stop offset="0.68" stop-color="#0a2034"/><stop offset="0.78" stop-color="#091b2c"/><stop offset="1" stop-color="#040c16"/></radialGradient>
<radialGradient id="glow" cx="308" cy="168" r="60" gradientUnits="userSpaceOnUse">
<stop offset="0" stop-color="#6cc4f5" stop-opacity="0.55"/><stop offset="0.5" stop-color="#3a8ccc" stop-opacity="0.25"/><stop offset="1" stop-color="#1e5a8c" stop-opacity="0"/></radialGradient>
<radialGradient id="glow2" cx="215" cy="185" r="35" gradientUnits="userSpaceOnUse">
<stop offset="0" stop-color="#5db8f0" stop-opacity="0.45"/><stop offset="1" stop-color="#1e5a8c" stop-opacity="0"/></radialGradient>
<linearGradient id="shade" x1="0" y1="225" x2="0" y2="0" gradientUnits="userSpaceOnUse">
<stop offset="0" stop-color="#000" stop-opacity="0.18"/><stop offset="1" stop-color="#000" stop-opacity="0"/></linearGradient>
<linearGradient id="gfade" x1="0" y1="0" x2="0" y2="160" gradientUnits="userSpaceOnUse"><stop offset="0" stop-color="#3a7fb5" stop-opacity="1"/><stop offset="0.6" stop-color="#3a7fb5" stop-opacity="0.8"/><stop offset="1" stop-color="#3a7fb5" stop-opacity="0"/></linearGradient>
<filter id="bl" x="-20%" y="-20%" width="140%" height="140%"><feGaussianBlur stdDeviation="2"/></filter>
<filter id="bl1"><feGaussianBlur stdDeviation="0.6"/></filter>
</defs>
<rect width="406" height="225" fill="url(#bg)"/>
<circle cx="420" cy="330" r="300" fill="none" stroke="#2a6a9a" stroke-opacity="0.05" stroke-width="6"/>
<circle cx="420" cy="330" r="340" fill="none" stroke="#2a6a9a" stroke-opacity="0.04" stroke-width="6"/>
<circle cx="420" cy="330" r="380" fill="none" stroke="#2a6a9a" stroke-opacity="0.05" stroke-width="6"/>
<circle cx="420" cy="330" r="420" fill="none" stroke="#2a6a9a" stroke-opacity="0.04" stroke-width="6"/>
<circle cx="420" cy="330" r="460" fill="none" stroke="#2a6a9a" stroke-opacity="0.03" stroke-width="6"/>
<rect width="406" height="225" fill="url(#glow)"/>
<rect width="406" height="225" fill="url(#glow2)"/>
<path d="M327.0 2.0 C329.7 4.5 338.7 10.2 343.0 17.0 C347.3 23.8 351.7 33.7 353.0 43.0 C354.3 52.3 352.7 63.0 351.0 73.0 C349.3 83.0 345.0 93.8 343.0 103.0 C341.0 112.2 339.3 119.7 339.0 128.0 C338.7 136.3 340.7 148.8 341.0 153.0" fill="none" stroke="url(#gfade)" stroke-opacity="0.22" stroke-width="4.5"/>
<path d="M317.0 33.0 C320.0 36.3 331.0 45.5 335.0 53.0 C339.0 60.5 341.7 69.7 341.0 78.0 C340.3 86.3 334.0 94.7 331.0 103.0 C328.0 111.3 324.0 120.5 323.0 128.0 C322.0 135.5 324.7 144.7 325.0 148.0" fill="none" stroke="url(#gfade)" stroke-opacity="0.22" stroke-width="4.5"/>
<path d="M327 21L353 15 M327 36L353 30 M327 51L353 45 M327 66L353 60 M327 81L353 75 M327 96L353 90 M327 111L353 105 M327 126L353 120 M327 141L353 135" fill="none" stroke="url(#gfade)" stroke-opacity="0.12" stroke-width="2"/>
<path d="M207.0 103.0 C209.7 105.0 217.0 110.0 223.0 115.0 C229.0 120.0 236.3 127.7 243.0 133.0 C249.7 138.3 259.7 144.7 263.0 147.0" fill="none" stroke="#3a7fb5" stroke-opacity="0.12" stroke-width="4" filter="url(#bl1)"/>
<path d="M211 121L199 133 M220 127L208 139 M229 133L217 145 M238 139L226 151 M247 145L235 157" fill="none" stroke="#3a7fb5" stroke-opacity="0.08" stroke-width="2" filter="url(#bl1)"/>
<g filter="url(#bl)" opacity="0.42"><path d="M298.0 17.0 C297.5 16.4 295.2 14.8 294.8 13.6 C294.4 12.4 294.1 11.2 295.6 9.9 C297.1 8.6 300.0 6.4 303.8 5.8 C307.6 5.3 314.5 5.4 318.6 6.6 C322.7 7.8 326.0 10.2 328.5 13.2 C331.0 16.2 332.6 20.0 333.4 24.7 C334.2 29.3 334.1 36.4 333.4 41.1 C332.7 45.7 331.2 49.0 329.3 52.6 C327.4 56.2 325.0 59.8 321.9 62.5 C318.8 65.2 314.2 66.5 310.4 69.0 C306.6 71.5 303.8 74.5 298.9 77.3 C294.0 80.1 286.5 83.9 281.0 86.0 C275.5 88.1 270.0 89.1 266.0 90.0 C262.0 90.9 258.5 91.2 257.0 91.5" fill="none" stroke="#3d9ce0" stroke-width="6.0" stroke-opacity="0.6"/><path d="M289.0 49.3 C287.4 48.5 280.6 45.9 279.2 44.4 C277.8 42.9 278.9 41.3 280.8 40.3 C282.7 39.3 287.1 38.3 290.7 38.2 C294.3 38.1 298.6 38.2 302.2 39.5 C305.8 40.8 309.4 43.3 312.1 46.0 C314.8 48.7 316.8 52.1 318.6 55.9 C320.4 59.8 321.7 64.7 322.7 69.1 C323.7 73.5 324.1 80.0 324.4 82.2" fill="none" stroke="#3d9ce0" stroke-width="7.8" stroke-opacity="0.95"/><path d="M322.7 69.1 C323.0 71.3 324.2 77.0 324.4 82.2 C324.5 87.3 325.2 94.7 323.6 100.0 C322.0 105.3 318.1 109.5 315.0 114.0 C311.9 118.5 308.5 123.3 305.0 127.0 C301.5 130.7 298.3 133.2 294.0 136.0 C289.7 138.8 281.5 142.7 279.0 144.0 M257.0 91.5 C258.4 92.5 262.2 95.0 265.7 97.7 C269.2 100.4 274.3 103.8 278.0 107.5 C281.7 111.2 285.2 115.9 288.0 120.0 C290.8 124.1 292.4 127.3 295.0 132.0 C297.6 136.7 302.4 145.4 303.9 148.1" fill="none" stroke="#3d9ce0" stroke-width="8.8" stroke-opacity="1.0"/><path d="M294.0 136.0 C291.5 137.3 283.9 141.8 279.0 144.0 C274.1 146.2 270.0 146.8 264.6 149.0 C259.2 151.2 252.5 154.6 246.4 157.2 C240.3 159.8 232.7 162.0 228.2 164.8 C223.7 167.6 221.2 170.4 219.2 173.9 C217.2 177.4 216.1 181.5 216.1 186.0 C216.1 190.5 217.4 195.8 219.2 201.1 C221.0 206.4 224.7 213.5 226.7 217.8 C228.7 222.1 230.5 225.5 231.3 227.0 M295.0 132.0 C296.5 134.7 301.6 141.6 303.9 148.1 C306.1 154.6 308.0 164.5 308.5 170.8 C309.0 177.1 308.2 180.9 307.0 186.0 C305.8 191.1 303.5 196.3 301.0 201.1 C298.5 205.9 294.3 210.4 291.8 214.7 C289.3 219.0 286.8 224.9 285.8 227.0" fill="none" stroke="#3d9ce0" stroke-width="10.2" stroke-opacity="1.0"/><path d="M299.0 17.0L314.0 10.0 M302.0 24.0L325.0 16.0 M305.5 32.9L330.0 26.0 M303.8 39.5L331.0 35.4 M308.8 44.4L331.0 44.4 M312.0 51.0L329.0 50.0 M294.0 62.5L317.0 56.0 M290.7 70.7L320.0 63.0 M280.8 79.0L321.0 73.0 M268.1 91.5L321.0 90.3 M274.3 97.0L320.0 102.0 M279.2 103.0L315.0 113.7 M284.2 110.0L308.0 122.0 M251.0 155.7L291.8 148.1 M261.5 151.2L294.8 139.0 M236.6 164.8L296.4 167.1 M231.3 170.8L294.8 184.5 M226.7 176.9L290.3 202.6 M226.7 186.0L285.8 214.7 M229.8 198.1L275.0 225.0 M234.3 210.2L258.5 225.0" fill="none" stroke="#3d9ce0" stroke-width="3"/></g>
<path d="M299.0 17.0L314.0 10.0 M302.0 24.0L325.0 16.0 M305.5 32.9L330.0 26.0 M303.8 39.5L331.0 35.4 M308.8 44.4L331.0 44.4 M312.0 51.0L329.0 50.0 M294.0 62.5L317.0 56.0 M290.7 70.7L320.0 63.0 M280.8 79.0L321.0 73.0 M268.1 91.5L321.0 90.3 M274.3 97.0L320.0 102.0 M279.2 103.0L315.0 113.7 M284.2 110.0L308.0 122.0 M251.0 155.7L291.8 148.1 M261.5 151.2L294.8 139.0 M236.6 164.8L296.4 167.1 M231.3 170.8L294.8 184.5 M226.7 176.9L290.3 202.6 M226.7 186.0L285.8 214.7 M229.8 198.1L275.0 225.0 M234.3 210.2L258.5 225.0" fill="none" stroke="#a2d4f0" stroke-width="1.9" stroke-opacity="0.75"/>
<path d="M298.0 17.0 C297.5 16.4 295.2 14.8 294.8 13.6 C294.4 12.4 294.1 11.2 295.6 9.9 C297.1 8.6 300.0 6.4 303.8 5.8 C307.6 5.3 314.5 5.4 318.6 6.6 C322.7 7.8 326.0 10.2 328.5 13.2 C331.0 16.2 332.6 20.0 333.4 24.7 C334.2 29.3 334.1 36.4 333.4 41.1 C332.7 45.7 331.2 49.0 329.3 52.6 C327.4 56.2 325.0 59.8 321.9 62.5 C318.8 65.2 314.2 66.5 310.4 69.0 C306.6 71.5 303.8 74.5 298.9 77.3 C294.0 80.1 286.5 83.9 281.0 86.0 C275.5 88.1 270.0 89.1 266.0 90.0 C262.0 90.9 258.5 91.2 257.0 91.5" fill="none" stroke="#86c3e8" stroke-opacity="0.6" stroke-width="3.0" stroke-linecap="round"/>
<path d="M298.0 17.0 C297.5 16.4 295.2 14.8 294.8 13.6 C294.4 12.4 294.1 11.2 295.6 9.9 C297.1 8.6 300.0 6.4 303.8 5.8 C307.6 5.3 314.5 5.4 318.6 6.6 C322.7 7.8 326.0 10.2 328.5 13.2 C331.0 16.2 332.6 20.0 333.4 24.7 C334.2 29.3 334.1 36.4 333.4 41.1 C332.7 45.7 331.2 49.0 329.3 52.6 C327.4 56.2 325.0 59.8 321.9 62.5 C318.8 65.2 314.2 66.5 310.4 69.0 C306.6 71.5 303.8 74.5 298.9 77.3 C294.0 80.1 286.5 83.9 281.0 86.0 C275.5 88.1 270.0 89.1 266.0 90.0 C262.0 90.9 258.5 91.2 257.0 91.5" fill="none" stroke="#c5e9ff" stroke-width="1.4" stroke-opacity="0.33" stroke-linecap="round" filter="url(#bl1)"/>
<path d="M289.0 49.3 C287.4 48.5 280.6 45.9 279.2 44.4 C277.8 42.9 278.9 41.3 280.8 40.3 C282.7 39.3 287.1 38.3 290.7 38.2 C294.3 38.1 298.6 38.2 302.2 39.5 C305.8 40.8 309.4 43.3 312.1 46.0 C314.8 48.7 316.8 52.1 318.6 55.9 C320.4 59.8 321.7 64.7 322.7 69.1 C323.7 73.5 324.1 80.0 324.4 82.2" fill="none" stroke="#86c3e8" stroke-opacity="0.95" stroke-width="4.8" stroke-linecap="round"/>
<path d="M289.0 49.3 C287.4 48.5 280.6 45.9 279.2 44.4 C277.8 42.9 278.9 41.3 280.8 40.3 C282.7 39.3 287.1 38.3 290.7 38.2 C294.3 38.1 298.6 38.2 302.2 39.5 C305.8 40.8 309.4 43.3 312.1 46.0 C314.8 48.7 316.8 52.1 318.6 55.9 C320.4 59.8 321.7 64.7 322.7 69.1 C323.7 73.5 324.1 80.0 324.4 82.2" fill="none" stroke="#c5e9ff" stroke-width="2.2" stroke-opacity="0.52" stroke-linecap="round" filter="url(#bl1)"/>
<path d="M322.7 69.1 C323.0 71.3 324.2 77.0 324.4 82.2 C324.5 87.3 325.2 94.7 323.6 100.0 C322.0 105.3 318.1 109.5 315.0 114.0 C311.9 118.5 308.5 123.3 305.0 127.0 C301.5 130.7 298.3 133.2 294.0 136.0 C289.7 138.8 281.5 142.7 279.0 144.0 M257.0 91.5 C258.4 92.5 262.2 95.0 265.7 97.7 C269.2 100.4 274.3 103.8 278.0 107.5 C281.7 111.2 285.2 115.9 288.0 120.0 C290.8 124.1 292.4 127.3 295.0 132.0 C297.6 136.7 302.4 145.4 303.9 148.1" fill="none" stroke="#86c3e8" stroke-opacity="1.0" stroke-width="5.8" stroke-linecap="round"/>
<path d="M322.7 69.1 C323.0 71.3 324.2 77.0 324.4 82.2 C324.5 87.3 325.2 94.7 323.6 100.0 C322.0 105.3 318.1 109.5 315.0 114.0 C311.9 118.5 308.5 123.3 305.0 127.0 C301.5 130.7 298.3 133.2 294.0 136.0 C289.7 138.8 281.5 142.7 279.0 144.0 M257.0 91.5 C258.4 92.5 262.2 95.0 265.7 97.7 C269.2 100.4 274.3 103.8 278.0 107.5 C281.7 111.2 285.2 115.9 288.0 120.0 C290.8 124.1 292.4 127.3 295.0 132.0 C297.6 136.7 302.4 145.4 303.9 148.1" fill="none" stroke="#c5e9ff" stroke-width="2.6" stroke-opacity="0.55" stroke-linecap="round" filter="url(#bl1)"/>
<path d="M294.0 136.0 C291.5 137.3 283.9 141.8 279.0 144.0 C274.1 146.2 270.0 146.8 264.6 149.0 C259.2 151.2 252.5 154.6 246.4 157.2 C240.3 159.8 232.7 162.0 228.2 164.8 C223.7 167.6 221.2 170.4 219.2 173.9 C217.2 177.4 216.1 181.5 216.1 186.0 C216.1 190.5 217.4 195.8 219.2 201.1 C221.0 206.4 224.7 213.5 226.7 217.8 C228.7 222.1 230.5 225.5 231.3 227.0 M295.0 132.0 C296.5 134.7 301.6 141.6 303.9 148.1 C306.1 154.6 308.0 164.5 308.5 170.8 C309.0 177.1 308.2 180.9 307.0 186.0 C305.8 191.1 303.5 196.3 301.0 201.1 C298.5 205.9 294.3 210.4 291.8 214.7 C289.3 219.0 286.8 224.9 285.8 227.0" fill="none" stroke="#86c3e8" stroke-opacity="1.0" stroke-width="7.2" stroke-linecap="round"/>
<path d="M294.0 136.0 C291.5 137.3 283.9 141.8 279.0 144.0 C274.1 146.2 270.0 146.8 264.6 149.0 C259.2 151.2 252.5 154.6 246.4 157.2 C240.3 159.8 232.7 162.0 228.2 164.8 C223.7 167.6 221.2 170.4 219.2 173.9 C217.2 177.4 216.1 181.5 216.1 186.0 C216.1 190.5 217.4 195.8 219.2 201.1 C221.0 206.4 224.7 213.5 226.7 217.8 C228.7 222.1 230.5 225.5 231.3 227.0 M295.0 132.0 C296.5 134.7 301.6 141.6 303.9 148.1 C306.1 154.6 308.0 164.5 308.5 170.8 C309.0 177.1 308.2 180.9 307.0 186.0 C305.8 191.1 303.5 196.3 301.0 201.1 C298.5 205.9 294.3 210.4 291.8 214.7 C289.3 219.0 286.8 224.9 285.8 227.0" fill="none" stroke="#c5e9ff" stroke-width="3.2" stroke-opacity="0.55" stroke-linecap="round" filter="url(#bl1)"/>
</svg></div>

<div class="t" style="left:348.6px;top:446.6px;font-size:17.4px;color:#000">Congrats, you are ready to go!</div>
<div class="a" style="left:348px;top:443.5px;width:1px;height:20px;background:#000"></div>
<div class="t" style="left:347.8px;top:486px;font-size:9.55px;color:#000">Your forked repo is setup as a helix project and you are ready to start developing.</div>
<div class="t" style="left:347.8px;top:498.3px;font-size:9.55px;color:#000">The content you are looking at is served from this <span style="color:#1155cc;text-decoration:underline">gdrive</span></div>
<div class="t" style="left:347.8px;top:523px;font-size:9.55px;color:#000">Adjust the <span style="font-family:'Liberation Mono';font-size:8.7px;letter-spacing:0.34px;color:#3a3a3a">fstab.yaml</span> to point to a folder either in your sharepoint or your gdrive that you</div>
<div class="t" style="left:347.8px;top:537.3px;font-size:9.55px;color:#000">shared with helix. See the full tutorial here:</div>
<div class="t" style="left:347.3px;top:562.3px;font-size:9.6px;color:#1155cc;text-decoration:underline">https://www.hlx.live/tutorial</div>

<!-- mouse pointer -->
<svg style="left:350.5px;top:458.3px" width="7" height="10" viewBox="0 0 7 10"><path d="M0.5 0.5V8.2L2.3 6.5L3.6 9.4L4.9 8.8L3.7 6H6.2Z" fill="#000" stroke="#fff" stroke-width="0.7" stroke-linejoin="round"/></svg>
<!-- spellcheck squiggle -->
<svg style="left:430px;top:494.5px" width="24" height="2" viewBox="0 0 24 2"><path d="M0 1.5 L1.5 0.5 L3 1.5 L4.5 0.5 L6 1.5 L7.5 0.5 L9 1.5 L10.5 0.5 L12 1.5 L13.5 0.5 L15 1.5 L16.5 0.5 L18 1.5 L19.5 0.5 L21 1.5 L22.5 0.5 L24 1.5" fill="none" stroke="#4b86e5" stroke-width="0.6"/></svg>
</body></html>
